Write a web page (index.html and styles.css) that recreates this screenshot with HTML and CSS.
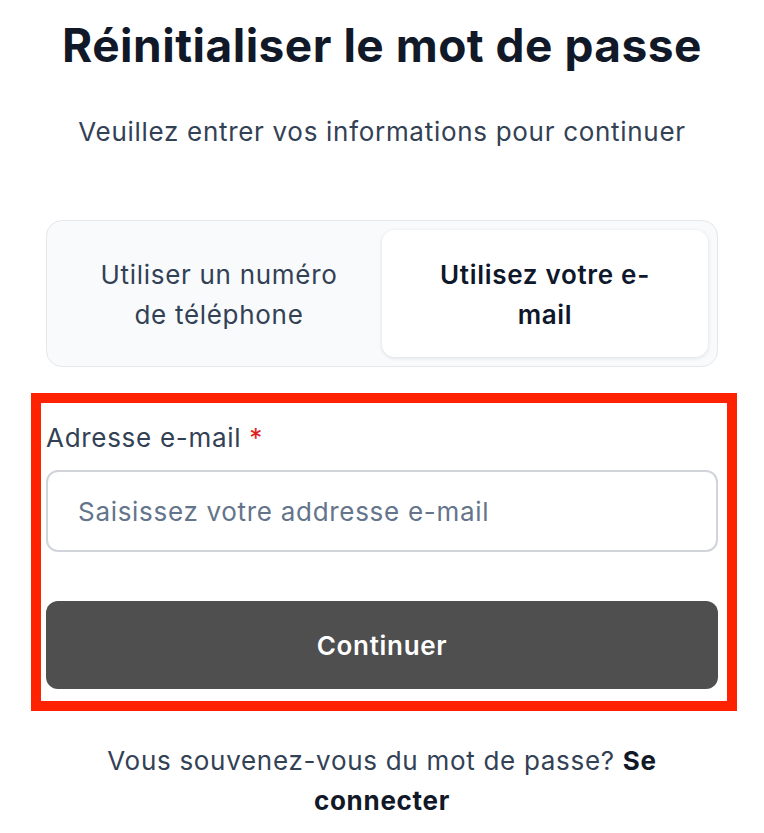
FILE: index.html
```html
<!DOCTYPE html>
<html lang="fr">
<head>
    <meta charset="UTF-8">
    <meta name="viewport" content="width=device-width, initial-scale=1.0">
    <title>Réinitialiser le mot de passe</title>
    <link rel="stylesheet" href="styles.css">
</head>
<body>
    <div class="page">
        <h1 class="title">Réinitialiser le mot de passe</h1>
        <p class="subtitle">Veuillez entrer vos informations pour continuer</p>

        <div class="tabs">
            <button class="tab">Utiliser un numéro de téléphone</button>
            <button class="tab active">Utilisez votre e-mail</button>
        </div>

        <form class="form-box" onsubmit="return false;">
            <label for="email" class="label">Adresse e-mail <span class="required">*</span></label>
            <input type="email" id="email" class="input" placeholder="Saisissez votre addresse e-mail">
            <button type="submit" class="submit">Continuer</button>
        </form>

        <p class="footer">Vous souvenez-vous du mot de passe? <a href="#" class="link">Se connecter</a></p>
    </div>
</body>
</html>
```

FILE: styles.css
```css
body {
    margin: 0;
    background: #fff;
    font-family: Inter, "Noto Sans", sans-serif;
    color: #334155;
    letter-spacing: 0.7px;
}
.page {
    width: 672px;
    margin: 0 auto;
}
.title {
    margin: 17px 0 0;
    font-size: 46px;
    line-height: 56px;
    font-weight: 700;
    color: #111827;
    text-align: center;
    letter-spacing: 0.5px;
}
.subtitle {
    margin: 41px 0 0;
    font-size: 26px;
    line-height: 36px;
    text-align: center;
    color: #334155;
}
.tabs {
    margin-top: 70px;
    display: grid;
    grid-template-columns: 1fr 1fr;
    padding: 9px;
    border: 1px solid #e5e7eb;
    border-radius: 16px;
    background: #f8fafc;
}
.tab {
    border: none;
    background: transparent;
    padding: 25px 36px 22px;
    font-family: inherit;
    font-size: 26px;
    line-height: 40px;
    letter-spacing: inherit;
    color: #334155;
    border-radius: 13px;
}
.tab.active {
    background: #fff;
    color: #0f172a;
    font-weight: 600;
    box-shadow: 0 1px 4px rgba(15, 23, 42, 0.12);
}
.form-box {
    margin: 26px -19px 0 -15px;
    border: 10px solid #ff2200;
    padding: 18px 9px 12px 5px;
    display: flex;
    flex-direction: column;
}
.label {
    font-size: 26px;
    line-height: 33px;
    color: #334155;
}
.required {
    color: #e11d1d;
}
.input {
    margin-top: 16px;
    height: 82px;
    box-sizing: border-box;
    border: 2px solid #d1d5db;
    border-radius: 12px;
    padding: 0 30px;
    font-family: inherit;
    font-size: 26px;
    letter-spacing: inherit;
    color: #111827;
}
.input::placeholder {
    color: #64748b;
}
.submit {
    margin-top: 49px;
    height: 88px;
    border: none;
    border-radius: 12px;
    background: #4f4f4f;
    color: #fff;
    font-family: inherit;
    font-size: 26px;
    font-weight: 600;
    letter-spacing: inherit;
    cursor: pointer;
}
.footer {
    margin: 30px 0 0;
    font-size: 26px;
    line-height: 40px;
    text-align: center;
    color: #334155;
}
.link {
    color: #111827;
    font-weight: 700;
    text-decoration: none;
}
```
